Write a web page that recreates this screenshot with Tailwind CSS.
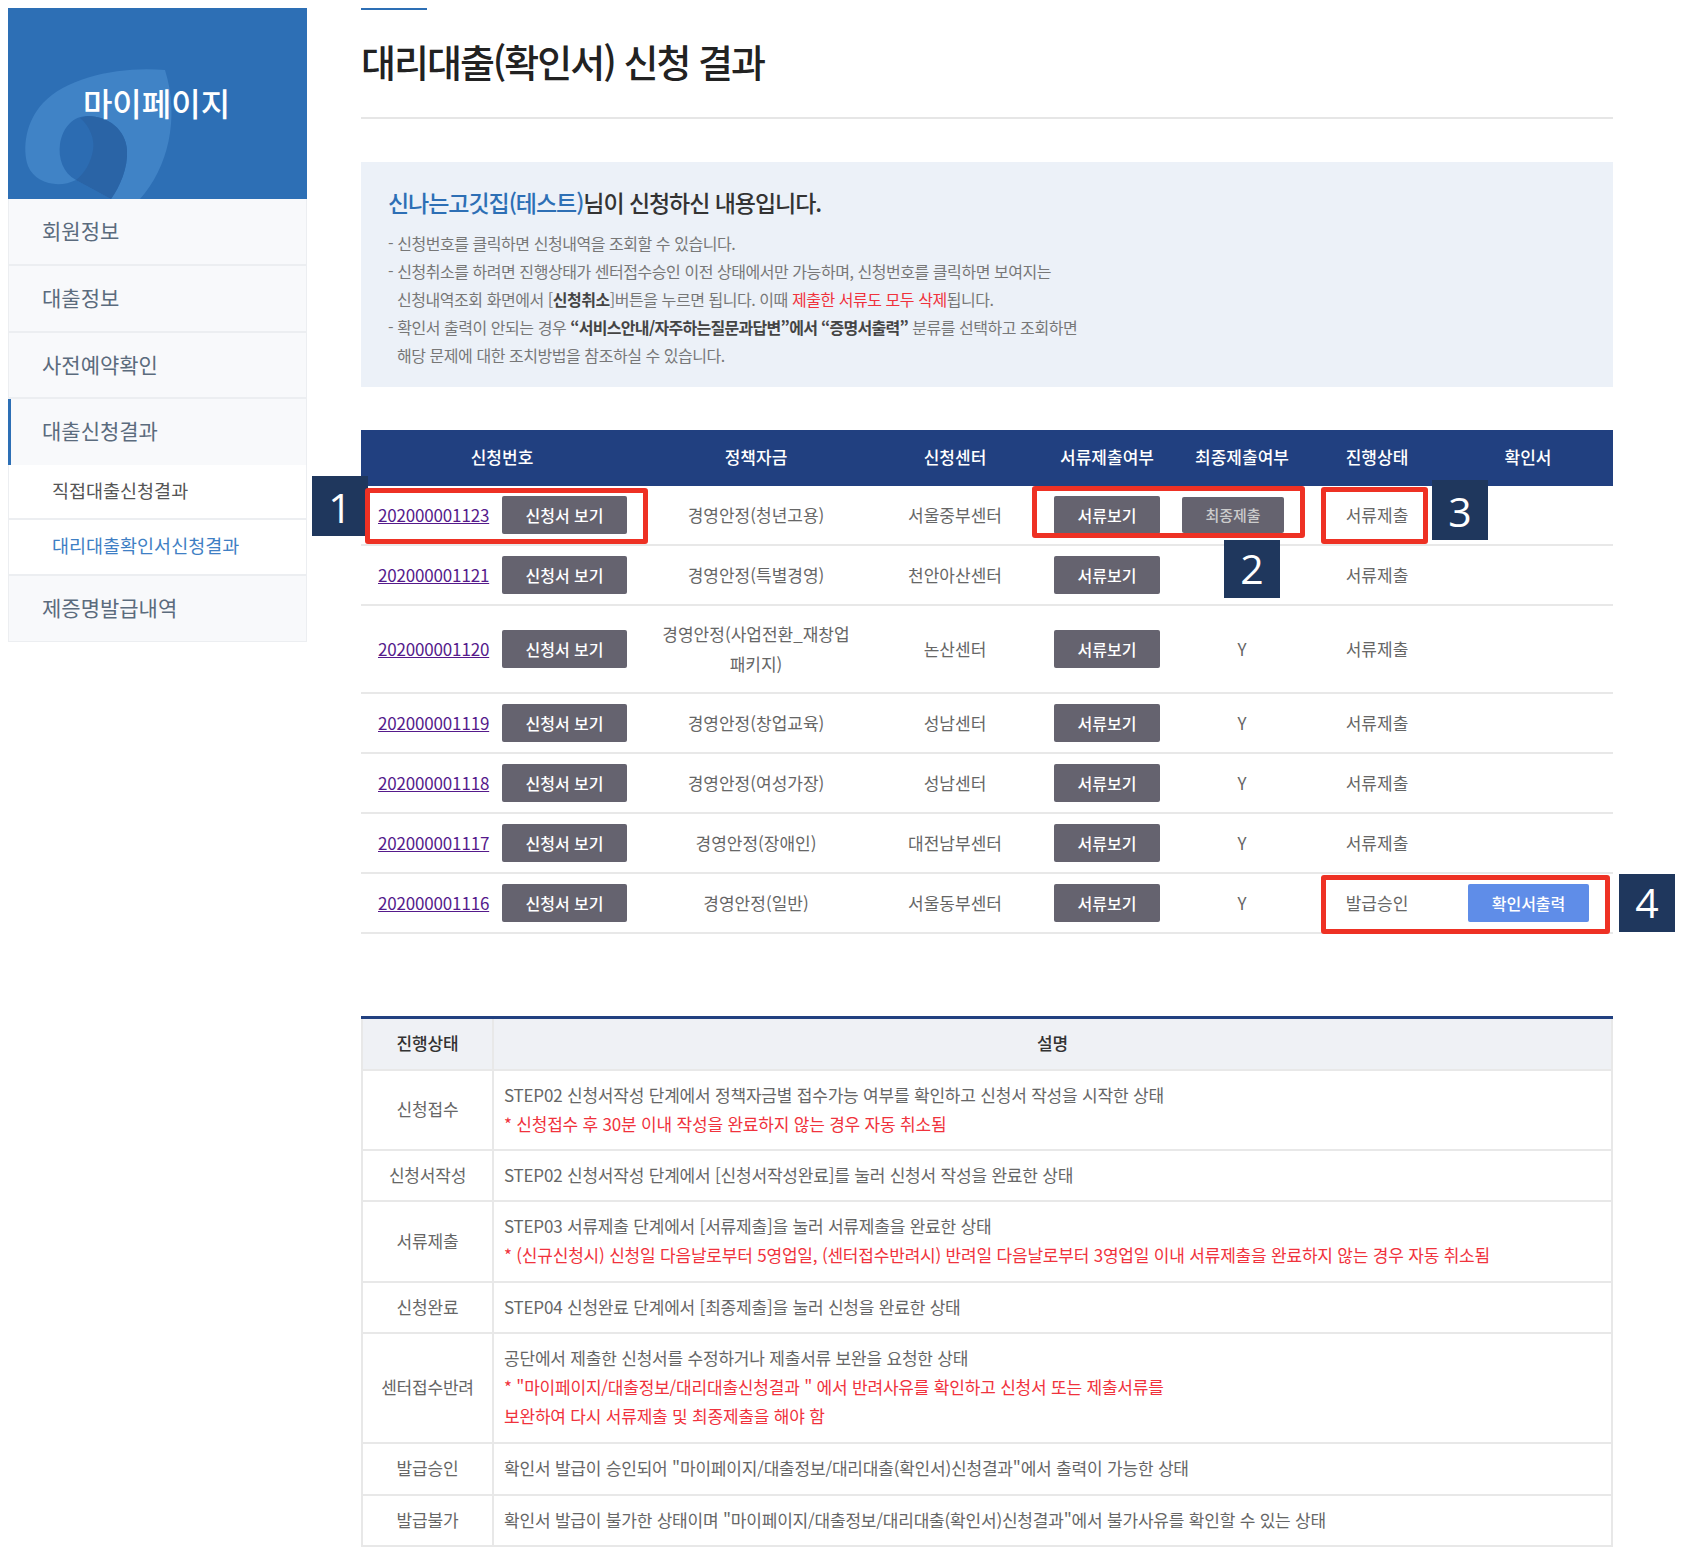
<!DOCTYPE html>
<html lang="ko">
<head>
    <meta charset="UTF-8">
    <title>대리대출(확인서) 신청 결과</title>
    <script src="https://cdn.jsdelivr.net/npm/@tailwindcss/browser@4"></script>
</head>
<body class="bg-white font-['Noto_Sans_CJK_KR','Noto_Sans',sans-serif] text-[#666]">
<div class="relative w-[1682px] h-[1556px] flex items-start pt-2 pl-2">

    <!-- Sidebar -->
    <aside class="w-[299px] shrink-0 mr-[54px]">
        <div class="relative h-[191px] bg-[#2d6fb5] overflow-hidden">
            <svg class="absolute inset-0" width="299" height="191" viewBox="0 0 299 191">
                <path d="M157 62C115 58 60 68 35 95C18 113 14 140 20 158C27 175 50 181 68 172L103 191L132 191C160 160 172 110 157 62Z" fill="#4083c6"/>
                <path d="M68 172C55 165 50 150 52 136C55 118 66 108 80 108C100 108 118 122 119 142C120 160 112 178 103 191Z" fill="#2c6cb2"/>
                <path d="M72 110C82 118 87 132 85 142C83 155 76 166 68 172L103 191C112 178 120 160 119 142C118 122 100 108 80 108Z" fill="#2a64a6"/>
            </svg>
            <div class="absolute left-0 right-0 top-[70px] text-center text-[32px] leading-[48px] font-medium text-white pr-[2px]">마이페이지</div>
        </div>
        <nav class="border-x border-[#eceef1] border-b">
            <a class="block h-[67px] leading-[62px] pl-[33px] bg-[#f8f9fb] text-[21px] text-[#5b6b7d] border-b-2 border-[#eceef1]">회원정보</a>
            <a class="block h-[67px] leading-[62px] pl-[33px] bg-[#f8f9fb] text-[21px] text-[#5b6b7d] border-b-2 border-[#eceef1]">대출정보</a>
            <a class="block h-[66px] leading-[62px] pl-[33px] bg-[#f8f9fb] text-[21px] text-[#5b6b7d] border-b-2 border-[#eceef1]">사전예약확인</a>
            <a class="block h-[66px] leading-[62px] pl-[31px] bg-[#f8f9fb] text-[21px] text-[#5b6b7d] border-l-[3px] border-[#2d6fb5] -ml-px">대출신청결과</a>
            <a class="block h-[55px] leading-[50px] pl-[43px] bg-white text-[18.5px] text-[#555] border-b-2 border-[#eceef1]">직접대출신청결과</a>
            <a class="block h-[56px] leading-[50px] pl-[43px] bg-white text-[18.5px] text-[#3f7fc4] border-b-2 border-[#eceef1]">대리대출확인서신청결과</a>
            <a class="block h-[65px] leading-[62px] pl-[33px] bg-[#f8f9fb] text-[21px] text-[#5b6b7d]">제증명발급내역</a>
        </nav>
    </aside>

    <!-- Main -->
    <main class="w-[1252px] shrink-0">
        <div class="w-[66px] h-[2px] bg-[#2d6fb5]"></div>
        <h1 class="h-[109px] pt-[23px] text-[38px] leading-[56px] font-medium tracking-[-2px] text-[#222] border-b-2 border-[#e6e6e6]">대리대출(확인서) 신청 결과</h1>

        <!-- 안내 -->
        <section class="mt-[43px] h-[225px] bg-[#ecf1f8] pl-[27px] pt-[20px]">
            <h2 class="text-[23px] leading-[40px] font-medium tracking-[-1.05px] text-[#333] mb-[7px]"><span class="text-[#2d6fb5]">신나는고깃집(테스트)</span>님이 신청하신 내용입니다.</h2>
            <div class="text-[16px] leading-[28px] tracking-[-0.45px] text-[#777]">
                <p>- 신청번호를 클릭하면 신청내역을 조회할 수 있습니다.</p>
                <p>- 신청취소를 하려면 진행상태가 센터접수승인 이전 상태에서만 가능하며, 신청번호를 클릭하면 보여지는</p>
                <p class="pl-[9px]">신청내역조회 화면에서 [<b class="text-[#444] font-bold">신청취소</b>]버튼을 누르면 됩니다. 이때 <span class="text-[#f0323c]">제출한 서류도 모두 삭제</span>됩니다.</p>
                <p>- 확인서 출력이 안되는 경우 <b class="text-[#444] font-bold tracking-[-0.7px]">“서비스안내/자주하는질문과답변”에서 “증명서출력”</b> 분류를 선택하고 조회하면</p>
                <p class="pl-[9px]">해당 문제에 대한 조치방법을 참조하실 수 있습니다.</p>
            </div>
        </section>

        <!-- 신청 목록 -->
        <table class="mt-[43px] w-[1252px] table-fixed border-collapse text-[17px] text-center">
            <colgroup>
                <col class="w-[282px]"><col class="w-[226px]"><col class="w-[172px]"><col class="w-[132px]"><col class="w-[138px]"><col class="w-[132px]"><col class="w-[170px]">
            </colgroup>
            <thead>
                <tr class="h-[56px] bg-[#214080] text-white font-medium">
                    <th class="font-medium pb-[2px]">신청번호</th><th class="font-medium pb-[2px]">정책자금</th><th class="font-medium pb-[2px]">신청센터</th><th class="font-medium pb-[2px]">서류제출여부</th><th class="font-medium pb-[2px]">최종제출여부</th><th class="font-medium pb-[2px]">진행상태</th><th class="font-medium pb-[2px]">확인서</th>
                </tr>
            </thead>
            <tbody>
                <tr class="h-[59px] border-b-2 border-[#e8e8e8]">
                    <td><div class="flex items-center pl-[17px] gap-[13px]"><a class="underline text-[#551a8b] w-[111px] tracking-[-0.17px]">202000001123</a><button class="w-[125px] h-[38px] bg-[#65636f] text-white font-medium rounded-[2px] text-[16px]">신청서 보기</button></div></td>
                    <td>경영안정(청년고용)</td><td>서울중부센터</td>
                    <td><button class="w-[106px] h-[38px] bg-[#65636f] text-white font-medium rounded-[2px] text-[16px]">서류보기</button></td>
                    <td><button class="w-[102px] h-[36px] -translate-x-[9px] bg-[#65636f] text-[#ccc] font-medium rounded-[2px] text-[15px]">최종제출</button></td>
                    <td>서류제출</td><td></td>
                </tr>
                <tr class="h-[60px] border-b-2 border-[#e8e8e8]">
                    <td><div class="flex items-center pl-[17px] gap-[13px]"><a class="underline text-[#551a8b] w-[111px] tracking-[-0.17px]">202000001121</a><button class="w-[125px] h-[38px] bg-[#65636f] text-white font-medium rounded-[2px] text-[16px]">신청서 보기</button></div></td>
                    <td>경영안정(특별경영)</td><td>천안아산센터</td>
                    <td><button class="w-[106px] h-[38px] bg-[#65636f] text-white font-medium rounded-[2px] text-[16px]">서류보기</button></td>
                    <td></td><td>서류제출</td><td></td>
                </tr>
                <tr class="h-[88px] border-b-2 border-[#e8e8e8]">
                    <td><div class="flex items-center pl-[17px] gap-[13px]"><a class="underline text-[#551a8b] w-[111px] tracking-[-0.17px]">202000001120</a><button class="w-[125px] h-[38px] bg-[#65636f] text-white font-medium rounded-[2px] text-[16px]">신청서 보기</button></div></td>
                    <td class="leading-[30px]">경영안정(사업전환_재창업<br>패키지)</td><td>논산센터</td>
                    <td><button class="w-[106px] h-[38px] bg-[#65636f] text-white font-medium rounded-[2px] text-[16px]">서류보기</button></td>
                    <td>Y</td><td>서류제출</td><td></td>
                </tr>
                <tr class="h-[60px] border-b-2 border-[#e8e8e8]">
                    <td><div class="flex items-center pl-[17px] gap-[13px]"><a class="underline text-[#551a8b] w-[111px] tracking-[-0.17px]">202000001119</a><button class="w-[125px] h-[38px] bg-[#65636f] text-white font-medium rounded-[2px] text-[16px]">신청서 보기</button></div></td>
                    <td>경영안정(창업교육)</td><td>성남센터</td>
                    <td><button class="w-[106px] h-[38px] bg-[#65636f] text-white font-medium rounded-[2px] text-[16px]">서류보기</button></td>
                    <td>Y</td><td>서류제출</td><td></td>
                </tr>
                <tr class="h-[60px] border-b-2 border-[#e8e8e8]">
                    <td><div class="flex items-center pl-[17px] gap-[13px]"><a class="underline text-[#551a8b] w-[111px] tracking-[-0.17px]">202000001118</a><button class="w-[125px] h-[38px] bg-[#65636f] text-white font-medium rounded-[2px] text-[16px]">신청서 보기</button></div></td>
                    <td>경영안정(여성가장)</td><td>성남센터</td>
                    <td><button class="w-[106px] h-[38px] bg-[#65636f] text-white font-medium rounded-[2px] text-[16px]">서류보기</button></td>
                    <td>Y</td><td>서류제출</td><td></td>
                </tr>
                <tr class="h-[60px] border-b-2 border-[#e8e8e8]">
                    <td><div class="flex items-center pl-[17px] gap-[13px]"><a class="underline text-[#551a8b] w-[111px] tracking-[-0.17px]">202000001117</a><button class="w-[125px] h-[38px] bg-[#65636f] text-white font-medium rounded-[2px] text-[16px]">신청서 보기</button></div></td>
                    <td>경영안정(장애인)</td><td>대전남부센터</td>
                    <td><button class="w-[106px] h-[38px] bg-[#65636f] text-white font-medium rounded-[2px] text-[16px]">서류보기</button></td>
                    <td>Y</td><td>서류제출</td><td></td>
                </tr>
                <tr class="h-[60px] border-b-2 border-[#e8e8e8]">
                    <td><div class="flex items-center pl-[17px] gap-[13px]"><a class="underline text-[#551a8b] w-[111px] tracking-[-0.17px]">202000001116</a><button class="w-[125px] h-[38px] bg-[#65636f] text-white font-medium rounded-[2px] text-[16px]">신청서 보기</button></div></td>
                    <td>경영안정(일반)</td><td>서울동부센터</td>
                    <td><button class="w-[106px] h-[38px] bg-[#65636f] text-white font-medium rounded-[2px] text-[16px]">서류보기</button></td>
                    <td>Y</td><td>발급승인</td>
                    <td><button class="w-[121px] h-[38px] ml-[1px] bg-[#5f8de8] text-white font-medium rounded-[2px] text-[16px]">확인서출력</button></td>
                </tr>
            </tbody>
        </table>

        <!-- 진행상태 설명 -->
        <table class="mt-[82px] w-[1252px] table-fixed border-collapse border-t-[3px] border-t-[#214080] text-[17px] leading-[29px] tracking-[-0.2px]">
            <colgroup><col class="w-[131px]"><col></colgroup>
            <thead>
                <tr class="h-[52px] bg-[#eff1f5] text-[#333] border-b-2 border-x-2 border-[#e8e8e8]">
                    <th class="font-medium border-r-2 border-[#e8e8e8] pb-[2px]">진행상태</th><th class="font-medium pb-[2px]">설명</th>
                </tr>
            </thead>
            <tbody>
                <tr class="h-[80px] border-b-2 border-x-2 border-[#e8e8e8]">
                    <td class="text-center border-r-2 border-[#e8e8e8] pb-[2px]">신청접수</td>
                    <td class="pl-[10px] pb-[2px]">STEP02 신청서작성 단계에서 정책자금별 접수가능 여부를 확인하고 신청서 작성을 시작한 상태<br><span class="text-[#f0323c]">* 신청접수 후 30분 이내 작성을 완료하지 않는 경우 자동 취소됨</span></td>
                </tr>
                <tr class="h-[51px] border-b-2 border-x-2 border-[#e8e8e8]">
                    <td class="text-center border-r-2 border-[#e8e8e8] pb-[2px]">신청서작성</td>
                    <td class="pl-[10px] pb-[2px]">STEP02 신청서작성 단계에서 [신청서작성완료]를 눌러 신청서 작성을 완료한 상태</td>
                </tr>
                <tr class="h-[81px] border-b-2 border-x-2 border-[#e8e8e8]">
                    <td class="text-center border-r-2 border-[#e8e8e8] pb-[2px]">서류제출</td>
                    <td class="pl-[10px] pb-[2px]">STEP03 서류제출 단계에서 [서류제출]을 눌러 서류제출을 완료한 상태<br><span class="text-[#f0323c]">* (신규신청시) 신청일 다음날로부터 5영업일, (센터접수반려시) 반려일 다음날로부터 3영업일 이내 서류제출을 완료하지 않는 경우 자동 취소됨</span></td>
                </tr>
                <tr class="h-[51px] border-b-2 border-x-2 border-[#e8e8e8]">
                    <td class="text-center border-r-2 border-[#e8e8e8] pb-[2px]">신청완료</td>
                    <td class="pl-[10px] pb-[2px]">STEP04 신청완료 단계에서 [최종제출]을 눌러 신청을 완료한 상태</td>
                </tr>
                <tr class="h-[110px] border-b-2 border-x-2 border-[#e8e8e8]">
                    <td class="text-center border-r-2 border-[#e8e8e8] pb-[2px]">센터접수반려</td>
                    <td class="pl-[10px] pb-[2px]">공단에서 제출한 신청서를 수정하거나 제출서류 보완을 요청한 상태<br><span class="text-[#f0323c]">* "마이페이지/대출정보/대리대출신청결과 " 에서 반려사유를 확인하고 신청서 또는 제출서류를<br>보완하여 다시 서류제출 및 최종제출을 해야 함</span></td>
                </tr>
                <tr class="h-[52px] border-b-2 border-x-2 border-[#e8e8e8]">
                    <td class="text-center border-r-2 border-[#e8e8e8] pb-[2px]">발급승인</td>
                    <td class="pl-[10px] pb-[2px]">확인서 발급이 승인되어 "마이페이지/대출정보/대리대출(확인서)신청결과"에서 출력이 가능한 상태</td>
                </tr>
                <tr class="h-[51px] border-b-2 border-x-2 border-[#e8e8e8]">
                    <td class="text-center border-r-2 border-[#e8e8e8] pb-[2px]">발급불가</td>
                    <td class="pl-[10px] pb-[2px]">확인서 발급이 불가한 상태이며 "마이페이지/대출정보/대리대출(확인서)신청결과"에서 불가사유를 확인할 수 있는 상태</td>
                </tr>
            </tbody>
        </table>
    </main>

    <!-- 번호와 빨간 표시 -->
    <div class="absolute left-[312px] top-[476px] w-[56px] h-[60px] pt-[4px] bg-[#1f375d] text-white text-[41px] font-['Open_Sans'] font-normal flex items-center justify-center">1</div>
    <div class="absolute left-[1224px] top-[540px] w-[56px] h-[58px] bg-[#1f375d] text-white text-[41px] font-['Open_Sans'] font-normal flex items-center justify-center">2</div>
    <div class="absolute left-[1432px] top-[480px] w-[56px] h-[60px] pt-[4px] bg-[#1f375d] text-white text-[41px] font-['Open_Sans'] font-normal flex items-center justify-center">3</div>
    <div class="absolute left-[1619px] top-[874px] w-[56px] h-[58px] bg-[#1f375d] text-white text-[41px] font-['Open_Sans'] font-normal flex items-center justify-center">4</div>
    <div class="absolute left-[365px] top-[488px] w-[283px] h-[56px] border-[5px] border-[#ee3124] rounded-[3px]"></div>
    <div class="absolute left-[1032px] top-[486px] w-[273px] h-[52px] border-[5px] border-[#ee3124] rounded-[3px]"></div>
    <div class="absolute left-[1321px] top-[487px] w-[107px] h-[57px] border-[5px] border-[#ee3124] rounded-[3px]"></div>
    <div class="absolute left-[1321px] top-[875px] w-[289px] h-[59px] border-[5px] border-[#ee3124] rounded-[3px]"></div>
</div>
</body>
</html>
